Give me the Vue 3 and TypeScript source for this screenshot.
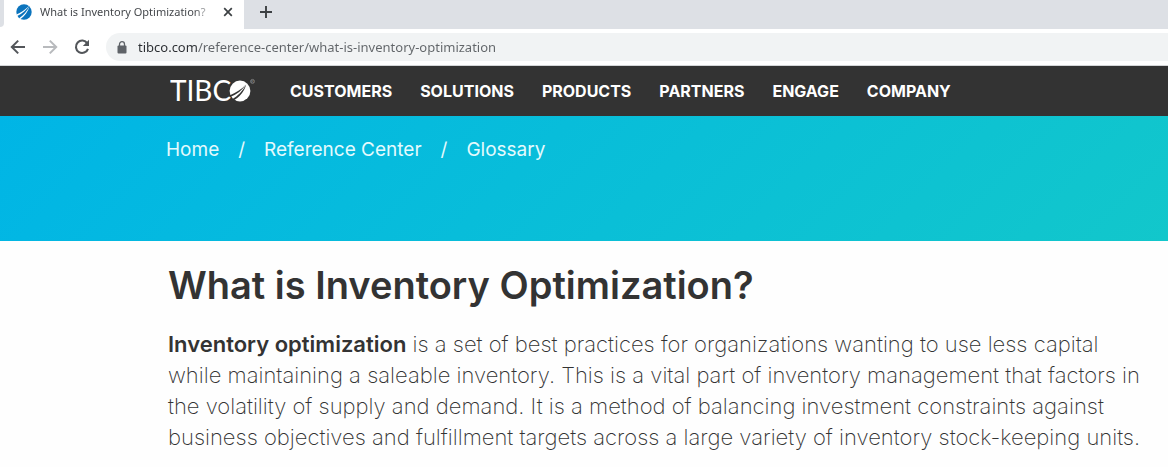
<script setup lang="ts">
import { ref } from 'vue'

const address = ref('tibco.com/reference-center/what-is-inventory-optimization')
const navItems: string[] = ['CUSTOMERS', 'SOLUTIONS', 'PRODUCTS', 'PARTNERS', 'ENGAGE', 'COMPANY']
const crumbs: string[] = ['Home', 'Reference Center', 'Glossary']
</script>

<template>
  <div class="browser">
    <div class="tab-strip">
      <div class="previous-tab"></div>
      <div class="tab">
        <svg class="favicon" viewBox="0 0 16 16" aria-hidden="true">
          <circle cx="8" cy="8" r="7.7" fill="#0b74bd" />
          <path d="M0.4 10.6C4.6 9 9.3 5.6 13.2 1.8C10.4 6 6.4 9.6 1.2 12Z" fill="#fff" />
          <path d="M3.2 14.2C7.6 11.2 11 7.2 13.6 2.2C12 7.6 8.8 12 4.6 15Z" fill="#fff" />
        </svg>
        <span class="tab-title">What is Inventory Optimization?</span>
        <button class="icon-button close" aria-label="Close tab">
          <svg width="10" height="10" viewBox="0 0 10 10"><path d="M1.2 1.2L8.8 8.8M8.8 1.2L1.2 8.8" stroke="#3c4043" stroke-width="1.7" /></svg>
        </button>
      </div>
      <button class="icon-button new-tab" aria-label="New tab">
        <svg width="12" height="12" viewBox="0 0 12 12"><path d="M6 0V12M0 6H12" stroke="#3c4043" stroke-width="1.9" /></svg>
      </button>
    </div>

    <div class="toolbar">
      <button class="icon-button" aria-label="Back">
        <svg width="16" height="16" viewBox="0 0 16 16" fill="none" stroke="#53565a" stroke-width="2"><path d="M15 8H2.4M8.2 1.6L1.8 8L8.2 14.4" /></svg>
      </button>
      <button class="icon-button" aria-label="Forward">
        <svg width="16" height="16" viewBox="0 0 16 16" fill="none" stroke="#b8babd" stroke-width="2"><path d="M1 8H13.6M7.8 1.6L14.2 8L7.8 14.4" /></svg>
      </button>
      <button class="icon-button" aria-label="Reload">
        <svg width="16" height="16" viewBox="0 0 16 16"><path d="M13.3 4.3A6.2 6.2 0 1 0 14 9.8" fill="none" stroke="#53565a" stroke-width="2.1" /><path d="M15 0.8V7H8.8Z" fill="#53565a" /></svg>
      </button>
      <label class="omnibox">
        <svg width="10" height="13" viewBox="0 0 10 13" aria-hidden="true"><rect x="0.5" y="4.6" width="9" height="8" rx="1" fill="#5f6368" /><path d="M2.5 5V3.2A2.5 2.5 0 0 1 7.5 3.2V5" fill="none" stroke="#5f6368" stroke-width="1.3" /></svg>
        <input v-model="address" type="text" aria-label="Address" spellcheck="false" />
      </label>
    </div>

    <header class="site-header">
      <a class="logo" href="#" aria-label="TIBCO home">
        <svg width="88" height="36" viewBox="0 -4 88 36">
          <text x="0" y="24" class="wordmark">TIBC</text>
          <circle cx="70" cy="14" r="10.4" fill="#fff" />
          <path d="M59.4 18.4C66 15.8 71.4 12.2 76 7.4C72 13.2 67 17.2 60.2 20Z" fill="#333" />
          <path d="M61.8 22.4C68.2 18.6 72.8 14 76.2 7.4C74 14.8 69.6 20 63.2 23.6Z" fill="#333" />
          <circle cx="82.5" cy="4.4" r="2" fill="none" stroke="#999" stroke-width="0.6" />
          <text x="81" y="6" class="registered">R</text>
        </svg>
      </a>
      <nav class="main-nav" aria-label="Main">
        <a v-for="item in navItems" :key="item" href="#">{{ item }}</a>
      </nav>
    </header>

    <section class="banner">
      <nav class="crumbs" aria-label="Breadcrumb">
        <template v-for="(crumb, index) in crumbs" :key="crumb">
          <span v-if="index > 0">/</span>
          <a href="#">{{ crumb }}</a>
        </template>
      </nav>
    </section>

    <main class="article">
      <h1>What is Inventory Optimization?</h1>
      <p>
        <strong>Inventory optimization</strong> is a set of best practices for organizations wanting to use less capital
        while maintaining a saleable inventory. This is a vital part of inventory management that factors in
        the volatility of supply and demand. It is a method of balancing investment constraints against
        business objectives and fulfillment targets across a large variety of inventory stock-keeping units.
      </p>
    </main>
  </div>
</template>

<style>
body {
  margin: 0;
  background: #fefefe;
}
</style>

<style scoped>
.browser {
  font-family: Inter, "Liberation Sans", sans-serif;
  color: #333;
}

a {
  color: inherit;
  text-decoration: none;
}

.icon-button {
  display: flex;
  flex: none;
  align-items: center;
  justify-content: center;
  padding: 0;
  border: 0;
  background: none;
}

.tab-strip {
  display: flex;
  height: 29px;
  background: linear-gradient(to right, #fff 4px, #dde0e5 4px);
}

.previous-tab {
  width: 4px;
  height: 27px;
  border-bottom-right-radius: 4px;
  background: #dde0e5;
}

.tab {
  display: flex;
  align-items: center;
  box-sizing: border-box;
  width: 240px;
  padding: 0 11px 5px 12px;
  background: #fff;
}

.favicon {
  flex: none;
  width: 16px;
  height: 16px;
}

.tab-title {
  flex: 1;
  margin-left: 8px;
  white-space: nowrap;
  font: 11px/16px "Noto Sans", sans-serif;
  color: #45484c;
  mask-image: linear-gradient(to right, #000 88%, transparent);
}

.close {
  width: 10px;
  margin-left: 8px;
}

.new-tab {
  width: 44px;
  height: 24px;
}

.toolbar {
  display: flex;
  align-items: center;
  gap: 16px;
  height: 36px;
  padding-left: 10px;
  border-bottom: 1px solid #d4d6d8;
  background: #fff;
}

.toolbar .icon-button {
  width: 16px;
  height: 28px;
}

.omnibox {
  display: flex;
  flex: 1;
  align-items: center;
  height: 28px;
  padding-left: 11px;
  border-radius: 14px 0 0 14px;
  background: #f1f3f4;
}

.omnibox svg {
  flex: none;
}

.omnibox input {
  flex: 1;
  min-width: 0;
  margin-left: 11px;
  padding: 0;
  border: 0;
  outline: 0;
  background: linear-gradient(to right, #2b2e32 60px, #606468 60px);
  background-clip: text;
  font: 13px/20px "Noto Sans", sans-serif;
  color: transparent;
}

.site-header {
  display: flex;
  align-items: center;
  height: 50px;
  padding-left: 170px;
  background: #333;
  color: #fff;
}

.logo {
  display: flex;
  margin-right: 32px;
}

.wordmark {
  font: 28px/28px Lato, sans-serif;
  fill: #fff;
}

.registered {
  font: 4px "Liberation Sans", sans-serif;
  fill: #999;
}

.main-nav {
  display: flex;
  gap: 28px;
  font-size: 16px;
  font-weight: 700;
}

.banner {
  height: 125px;
  background: linear-gradient(135deg, #00b5e6, #12c7cb);
  color: #e4fafd;
}

.crumbs {
  display: flex;
  gap: 19px;
  padding: 22px 0 0 166px;
  font-size: 19px;
  line-height: 24px;
}

.article {
  padding: 20px 18px 0 168px;
}

h1 {
  margin: 0;
  font-size: 38px;
  font-weight: 600;
  line-height: 48px;
}

p {
  margin: 20px 0 0;
  font-size: 22px;
  font-weight: 200;
  line-height: 31px;
}

strong {
  font-weight: 600;
}
</style>
